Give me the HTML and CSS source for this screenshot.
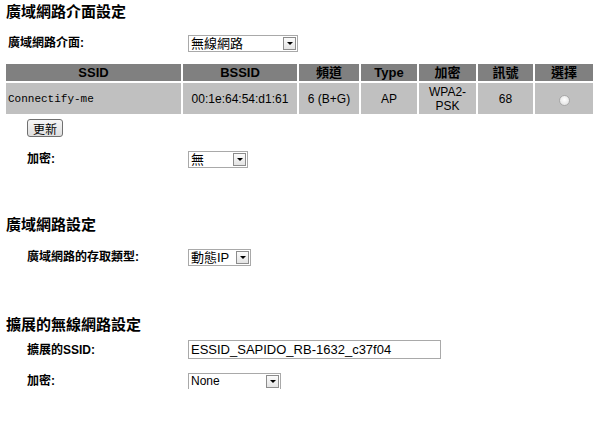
FILE: index.html
```html
<!DOCTYPE html>
<html lang="zh-Hant">
<head>
<meta charset="utf-8">
<title>廣域網路介面設定</title>
<link rel="stylesheet" href="styles.css">
</head>
<body>
<div class="page">
  <h2 class="title t1">廣域網路介面設定</h2>
  <div class="row r1">
    <span class="label flush">廣域網路介面:</span>
    <span class="select w-wan"><span class="sel-text">無線網路</span><span class="sel-btn"></span></span>
  </div>

  <table class="scan">
    <colgroup>
      <col class="c-ssid"><col class="c-bssid"><col class="c-ch"><col class="c-type"><col class="c-enc"><col class="c-sig"><col class="c-sel">
    </colgroup>
    <thead>
      <tr><th>SSID</th><th>BSSID</th><th>頻道</th><th>Type</th><th>加密</th><th>訊號</th><th>選擇</th></tr>
    </thead>
    <tbody>
      <tr>
        <td class="ssid">Connectify-me</td>
        <td>00:1e:64:54:d1:61</td>
        <td>6 (B+G)</td>
        <td>AP</td>
        <td>WPA2-<br>PSK</td>
        <td>68</td>
        <td><span class="radio"></span></td>
      </tr>
    </tbody>
  </table>

  <div class="btn-row"><span class="button">更新</span></div>

  <div class="row r-enc1">
    <span class="label">加密:</span>
    <span class="select w-none"><span class="sel-text">無</span><span class="sel-btn"></span></span>
  </div>

  <h2 class="title t2">廣域網路設定</h2>
  <div class="row r-type">
    <span class="label">廣域網路的存取類型:</span>
    <span class="select w-dyn"><span class="sel-text">動態IP</span><span class="sel-btn"></span></span>
  </div>

  <h2 class="title t3">擴展的無線網路設定</h2>
  <div class="row r-ssid">
    <span class="label">擴展的SSID:</span>
    <span class="input">ESSID_SAPIDO_RB-1632_c37f04</span>
  </div>
  <div class="row r-enc2">
    <span class="label">加密:</span>
    <span class="select w-nonee"><span class="sel-text latin">None</span><span class="sel-btn"></span></span>
  </div>
</div>
</body>
</html>
```

FILE: styles.css
```css
html, body {
  margin: 0;
  padding: 0;
  background: #ffffff;
}

body {
  font-family: "Liberation Sans", "Noto Sans CJK TC", Arial, sans-serif;
  color: #000;
  font-size: 12px;
}

.page {
  padding-left: 6px;
  width: 594px;
}

.title {
  margin: 0;
  font-size: 15px;
  font-weight: bold;
  line-height: 20px;
  height: 20px;
  font-family: "Liberation Sans", "Noto Sans CJK TC", sans-serif;
}

.t1 { margin-top: 2px; }
.t2 { margin-top: 47px; }
.t3 { margin-top: 49px; }

.row {
  display: flex;
  align-items: center;
}

.label {
  width: 161px;
  padding-left: 21px;
  font-weight: bold;
  font-size: 12px;
  line-height: 16px;
  font-family: "Liberation Sans", "Noto Sans CJK TC", sans-serif;
}

.label.flush {
  padding-left: 2px;
  width: 180px;
}

.r1 { margin-top: 12px; height: 18px; }
.r-enc1 { margin-top: 13px; height: 18px; }
.r-type { margin-top: 13px; height: 18px; }
.r-ssid { margin-top: 5px; height: 19px; }
.r-enc2 { margin-top: 14px; height: 16px; }

.select {
  display: flex;
  align-items: center;
  justify-content: space-between;
  box-sizing: border-box;
  height: 17px;
  border: 1px solid #a9a9a9;
  background: #fff;
  padding: 0 1px 0 2px;
}

.w-wan { width: 110px; }
.w-none { width: 60px; }
.w-dyn { width: 63px; }
.w-nonee { width: 93px; }

.sel-text {
  font-size: 13px;
  line-height: 15px;
  font-family: "Liberation Sans", "Noto Sans CJK TC", sans-serif;
  white-space: nowrap;
}

.sel-text.latin {
  font-size: 12px;
}

.sel-btn {
  position: relative;
  box-sizing: border-box;
  width: 13px;
  height: 13px;
  border: 1px solid #8c8c8c;
  background: linear-gradient(#fbfbfb, #e4e4e4);
  flex: none;
}

.sel-btn::after {
  content: "";
  position: absolute;
  left: 3px;
  top: 4px;
  border-left: 3px solid transparent;
  border-right: 3px solid transparent;
  border-top: 3px solid #000;
}

.input {
  box-sizing: border-box;
  width: 253px;
  height: 19px;
  border: 1px solid #a9a9a9;
  padding: 0 2px;
  font-size: 13px;
  line-height: 17px;
  font-family: "Liberation Sans", Arial, sans-serif;
  white-space: nowrap;
}

.scan {
  margin-top: 10px;
  margin-left: -2px;
  border-collapse: separate;
  border-spacing: 2px;
  table-layout: fixed;
  width: 591px;
}

.c-ssid { width: 175px; }
.c-bssid { width: 114px; }
.c-ch { width: 60px; }
.c-type { width: 56px; }
.c-enc { width: 57px; }
.c-sig { width: 55px; }
.c-sel { width: 58px; }

.scan th {
  background: #808080;
  height: 17px;
  padding: 0;
  font-size: 13px;
  line-height: 17px;
  font-weight: bold;
  text-align: center;
  font-family: "Liberation Sans", "Noto Sans CJK TC", sans-serif;
  color: #000;
}

.scan td {
  background: #c0c0c0;
  height: 31px;
  padding: 0;
  text-align: center;
  font-size: 12px;
  line-height: 14px;
  font-family: "Liberation Sans", Arial, sans-serif;
}

.scan td.ssid {
  text-align: left;
  padding-left: 2px;
  font-family: "Liberation Mono", "Courier New", monospace;
  font-size: 11px;
}

.radio {
  display: inline-block;
  vertical-align: middle;
  width: 11px;
  height: 11px;
  box-sizing: border-box;
  border-radius: 50%;
  border: 1px solid #a8a8a8;
  background: radial-gradient(circle at 50% 40%, #ffffff, #dcdcdc);
  margin-top: 2px;
}

.btn-row {
  margin-top: 3px;
  padding-left: 21px;
  height: 18px;
}

.button {
  display: inline-flex;
  align-items: center;
  justify-content: center;
  box-sizing: border-box;
  width: 36px;
  height: 18px;
  border: 1px solid #707070;
  border-radius: 3px;
  background: linear-gradient(#f6f6f6, #dedede);
  font-size: 12px;
  font-family: "Noto Sans CJK TC", sans-serif;
}
```
